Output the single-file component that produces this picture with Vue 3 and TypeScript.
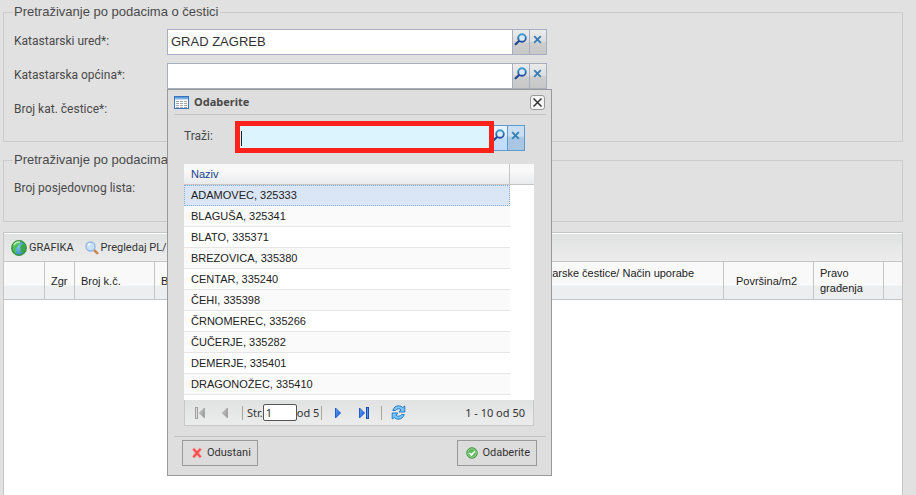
<script setup lang="ts">
import { ref } from 'vue'

interface Municipality {
  name: string
  code: string
}

const office = ref('GRAD ZAGREB')
const municipality = ref('')
const parcel = ref('')
const possession = ref('')
const search = ref('')
const pageNo = ref('1')
const selected = ref('325333')

const rows: Municipality[] = [
  { name: 'ADAMOVEC', code: '325333' },
  { name: 'BLAGUŠA', code: '325341' },
  { name: 'BLATO', code: '335371' },
  { name: 'BREZOVICA', code: '335380' },
  { name: 'CENTAR', code: '335240' },
  { name: 'ČEHI', code: '335398' },
  { name: 'ČRNOMEREC', code: '335266' },
  { name: 'ČUČERJE', code: '335282' },
  { name: 'DEMERJE', code: '335401' },
  { name: 'DRAGONOŽEC', code: '335410' },
]
</script>

<template>
  <svg class="defs" aria-hidden="true">
    <defs>
      <linearGradient id="blueV" x1="0" y1="0" x2="0" y2="1">
        <stop offset="0" stop-color="#3f9fd0" />
        <stop offset="1" stop-color="#1c4a9c" />
      </linearGradient>
      <linearGradient id="arrowBlue" x1="0" y1="0" x2="1" y2="1">
        <stop offset="0" stop-color="#6fb4fa" />
        <stop offset="1" stop-color="#0a3fc4" />
      </linearGradient>
      <linearGradient id="arrowGrey" x1="0" y1="0" x2="1" y2="1">
        <stop offset="0" stop-color="#d4d4d4" />
        <stop offset="1" stop-color="#8c8c8c" />
      </linearGradient>
      <radialGradient id="globe" cx="0.45" cy="0.4" r="0.7">
        <stop offset="0" stop-color="#7cc4f0" />
        <stop offset="1" stop-color="#2a7fc0" />
      </radialGradient>
      <symbol id="find" viewBox="0 0 13 13">
        <path d="M5.3 7.700 1.600 11.200" fill="none" stroke="#1d458f" stroke-width="2.200" stroke-linecap="round" />
        <circle cx="8" cy="5" r="3.800" fill="#dcebf5" stroke="url(#blueV)" stroke-width="1.900" />
      </symbol>
      <symbol id="cross" viewBox="0 0 9 9">
        <path d="M1.200 1.200l6.600 6.600M7.800 1.200l-6.600 6.600" fill="none" stroke="#3480b8" stroke-width="1.900" />
      </symbol>
    </defs>
  </svg>

  <main class="page">
    <form class="search-form" @submit.prevent>
      <fieldset class="group">
        <legend>Pretraživanje po podacima o čestici</legend>
        <div class="row">
          <label for="office">Katastarski ured*:</label>
          <div class="trigger-field">
            <input id="office" v-model="office" type="text" />
            <button type="button" aria-label="Traži ured"><svg class="find"><use href="#find" /></svg></button>
            <button type="button" aria-label="Očisti ured"><svg class="cross"><use href="#cross" /></svg></button>
          </div>
        </div>
        <div class="row">
          <label for="municipality">Katastarska općina*:</label>
          <div class="trigger-field">
            <input id="municipality" v-model="municipality" type="text" />
            <button type="button" aria-label="Traži općinu"><svg class="find"><use href="#find" /></svg></button>
            <button type="button" aria-label="Očisti općinu"><svg class="cross"><use href="#cross" /></svg></button>

            <section class="dialog" role="dialog" aria-labelledby="dialog-title">
              <header class="dialog-head">
                <svg class="icon-table" viewBox="0 0 15 13">
                  <rect x=".5" y=".5" width="14" height="12" fill="#fff" stroke="#3b75bd" />
                  <path d="M1 1h13v2.500H1z" fill="#82b5ea" />
                  <path d="M1 1.500h13" stroke="#5a96d8" />
                  <path d="M2 5.500h3m1 0h3m1 0h3M2 7.500h3m1 0h3m1 0h3M2 9.500h3m1 0h3m1 0h3M2 11.500h3m1 0h3m1 0h3" stroke="#a7a7a7" />
                </svg>
                <h2 id="dialog-title">Odaberite</h2>
                <button type="button" class="close" aria-label="Zatvori">
                  <svg viewBox="0 0 9 9"><path d="M.5.5l8 8M8.500.5l-8 8" stroke="#333" stroke-width="1.500" /></svg>
                </button>
              </header>

              <div class="lookup">
                <label for="search">Traži:</label>
                <div class="trigger-field active">
                  <input id="search" v-model="search" type="text" />
                  <span class="caret"></span>
                  <button type="button" aria-label="Traži"><svg class="find"><use href="#find" /></svg></button>
                  <button type="button" aria-label="Očisti"><svg class="cross"><use href="#cross" /></svg></button>
                </div>
              </div>

              <div class="list">
                <table>
                  <thead>
                    <tr>
                      <th scope="col">Naziv</th>
                      <th class="spare"></th>
                    </tr>
                  </thead>
                  <tbody>
                    <tr
                      v-for="row in rows"
                      :key="row.code"
                      :class="{ selected: row.code === selected }"
                      @click="selected = row.code"
                    >
                      <td>{{ row.name }}, {{ row.code }}</td>
                      <td class="spare"></td>
                    </tr>
                  </tbody>
                </table>

                <div class="pager">
                  <button type="button" disabled aria-label="Prva stranica">
                    <svg viewBox="0 0 12 12"><rect x="1.500" y=".5" width="2" height="11" fill="#ddd" stroke="#a0a0a0" /><path d="M10.500 1v10L5.500 6z" fill="url(#arrowGrey)" stroke="#a5a5a5" /></svg>
                  </button>
                  <button type="button" disabled aria-label="Prethodna stranica">
                    <svg viewBox="0 0 12 12"><path d="M8.500 1v10L3.500 6z" fill="url(#arrowGrey)" stroke="#a5a5a5" /></svg>
                  </button>
                  <span class="sep"></span>
                  <label for="page-no">Str.</label>
                  <input id="page-no" v-model="pageNo" type="text" />
                  <span>od 5</span>
                  <span class="sep near"></span>
                  <button type="button" class="next" aria-label="Sljedeća stranica">
                    <svg viewBox="0 0 12 12"><path d="M3.500 1v10L8.500 6z" fill="url(#arrowBlue)" stroke="#1e5fd8" /></svg>
                  </button>
                  <button type="button" aria-label="Zadnja stranica">
                    <svg viewBox="0 0 12 12"><path d="M1.500 1v10L6.500 6z" fill="url(#arrowBlue)" stroke="#1e5fd8" /><rect x="8.500" y=".5" width="2" height="11" fill="#5a94e8" stroke="#174eb8" /></svg>
                  </button>
                  <span class="sep wide"></span>
                  <button type="button" aria-label="Osvježi">
                    <svg class="refresh" viewBox="0 0 15 15">
                      <path d="M1.800 5.500C2.500 2.500 5 .8 7.500.8c1.800 0 3.200.7 4.200 1.800L13.800 1v6H8l2-2.200C8.500 3.200 5.500 3.500 4.500 5.500z" fill="#79c6f8" stroke="#1b73c6" stroke-width=".9" stroke-linejoin="round" />
                      <path d="M13.200 9.500c-.7 3-3.200 4.700-5.700 4.700-1.800 0-3.200-.7-4.200-1.800L1.200 14V8H7l-2 2.200c1.500 1.600 4.500 1.300 5.500-.7z" fill="#79c6f8" stroke="#1b73c6" stroke-width=".9" stroke-linejoin="round" />
                    </svg>
                  </button>
                  <span class="count">1 - 10 od 50</span>
                </div>
              </div>

              <footer class="dialog-foot">
                <button type="button">
                  <svg viewBox="0 0 13 13"><path d="M1.500 2.800 3.500 1 6.500 4.200 9.500 1l2 1.800-3.200 3.700 3.200 3.700-2 1.800-3-3.200-3 3.200-2-1.800 3.200-3.700z" fill="#f4504f" stroke="#f99" stroke-width=".8" /></svg>
                  Odustani
                </button>
                <button type="button">
                  <svg viewBox="0 0 13 13"><circle cx="6.500" cy="6.500" r="5.700" fill="#5db85a" stroke="#3b8f3a" /><circle cx="6.500" cy="6.500" r="4.600" fill="none" stroke="#a5dba0" stroke-width=".8" /><path d="M3.800 6.500 6 8.600l3.500-4" fill="none" stroke="#fff" stroke-width="1.800" /></svg>
                  Odaberite
                </button>
              </footer>
            </section>
          </div>
        </div>
        <div class="row">
          <label for="parcel">Broj kat. čestice*:</label>
          <div class="trigger-field"><input id="parcel" v-model="parcel" type="text" /></div>
        </div>
      </fieldset>

      <fieldset class="group short">
        <legend>Pretraživanje po podacima o posjedovnom listu</legend>
        <div class="row">
          <label for="possession">Broj posjedovnog lista:</label>
          <div class="trigger-field"><input id="possession" v-model="possession" type="text" /></div>
        </div>
      </fieldset>
    </form>

    <section class="results">
      <div class="toolbar">
        <button type="button">
          <svg class="globe" viewBox="0 0 16 16">
            <circle cx="8" cy="8" r="7.200" fill="url(#globe)" stroke="#35953a" stroke-width="1.500" />
            <path d="M2 5.500C3 3 5.500 1.500 8 1.800L9 3.500 7 5 6.500 7 4.500 8.500 5.500 11 5 13.500C2.500 12 1.200 9 2 5.500z" fill="#4fc050" />
            <path d="M10 5.500l3-2c1.500 1.800 2 4.500 1.200 7L11.500 13l-2-1 .5-2.500-1-2z" fill="#3ba745" />
            <path d="M2.800 5.200C4 2.900 6.500 1.700 9 2.100" fill="none" stroke="#c4efba" stroke-width="1.300" />
          </svg>
          GRAFIKA
        </button>
        <button type="button">
          <svg class="lens" viewBox="0 0 14 14">
            <path d="M9.200 9.200l3 3" stroke="#c98650" stroke-width="2.600" stroke-linecap="round" />
            <circle cx="5.500" cy="5.500" r="4.500" fill="#c8e2fb" stroke="#93b8e4" stroke-width="1.400" />
            <path d="M3 5C3.300 3.800 4.300 3 5.500 3" fill="none" stroke="#fff" stroke-width="1.300" />
          </svg>
          Pregledaj PL/KO
        </button>
      </div>
      <table>
        <colgroup>
          <col class="c-check" /><col class="c-zgr" /><col class="c-num" /><col class="c-num" /><col />
          <col class="c-area" /><col class="c-right" /><col class="c-end" />
        </colgroup>
        <thead>
          <tr>
            <th></th>
            <th scope="col">Zgr</th>
            <th scope="col">Broj k.č.</th>
            <th scope="col">Broj</th>
            <th scope="col" class="address">Adresa katastarske čestice/ Način uporabe</th>
            <th scope="col" class="area">Površina/m2</th>
            <th scope="col">Pravo građenja</th>
            <th></th>
          </tr>
        </thead>
      </table>
    </section>
  </main>
</template>

<style>
body {
  background: #e1e1e1;
  overflow: hidden;
}
</style>

<style scoped>
.defs {
  position: absolute;
  width: 0;
  height: 0;
}
.page {
  box-sizing: border-box;
  display: flex;
  flex-direction: column;
  min-height: 100vh;
  padding: 4px 13px 0 3px;
  color: #4a4a4a;
  font: 12px/16px Roboto, "Noto Sans", sans-serif;
}
button,
input {
  box-sizing: border-box;
  margin: 0;
  font: inherit;
  color: inherit;
}
button {
  display: flex;
  align-items: center;
  justify-content: center;
  padding: 0;
  border: 0;
  background: none;
  white-space: nowrap;
}
svg {
  flex: none;
}
.search-form {
  display: flex;
  flex-direction: column;
  gap: 10px;
}
.group {
  margin: 0;
  padding: 9px 10px 18px;
  border: 1px solid #cbcbcb;
}
.group.short {
  padding-top: 8px;
  padding-bottom: 19px;
}
.group legend {
  padding: 0 1px;
  margin-left: -1px;
  font: 13px/16px "Liberation Sans", sans-serif;
}
.row {
  display: flex;
  height: 26px;
}
.row + .row {
  margin-top: 8px;
}
.row > label {
  width: 153px;
  line-height: 24px;
}
.trigger-field {
  position: relative;
  display: flex;
  width: 380px;
  height: 26px;
}
.trigger-field > input {
  flex: 1;
  min-width: 0;
  padding: 0 3px 2px;
  border: 1px solid #a9adc4;
  background: #fff;
  color: #333;
  font: 13px "Liberation Sans", sans-serif;
  outline: none;
}
.trigger-field > button {
  width: 17px;
  padding: 0 2px 6px 0;
  border: solid #a9adc4;
  border-width: 1px 1px 1px 0;
  background: linear-gradient(#ececec 0, #dedede 45%, #cdcdcd 55%, #c8c8c8 100%);
}
.find {
  width: 13px;
  height: 13px;
}
.cross {
  width: 9px;
  height: 9px;
}
.dialog {
  position: absolute;
  top: 100%;
  left: 0;
  z-index: 1;
  box-sizing: border-box;
  width: 385px;
  padding: 0 5px 9px 6px;
  border: 1px solid #999;
  background: #dedede;
}
.dialog-head {
  display: flex;
  align-items: center;
  gap: 5px;
  height: 24px;
  border-bottom: 1px solid #c3c3c3;
}
.icon-table {
  width: 15px;
  height: 13px;
}
.dialog-head h2 {
  flex: 1;
  margin: 0;
  font: 700 11px/16px "Noto Sans", sans-serif;
}
.close {
  width: 15px;
  height: 15px;
  margin-right: 1px;
  border: 1px solid #999;
  border-radius: 3px;
  background: #f5f5f5;
}
.close svg {
  width: 9px;
  height: 9px;
}
.lookup {
  display: flex;
  padding: 10px 21px 13px 10px;
}
.lookup > label {
  width: 54px;
  line-height: 22px;
}
.lookup .trigger-field {
  flex: 1;
}
.active > input {
  border-color: #5b9bd0;
  background: #dcf4fd;
}
.active > button {
  border-color: #5b9bd0;
  background: linear-gradient(#e6f2fd 0 40%, #c2ddfb 50% 100%);
}
.active > button + button {
  background: linear-gradient(#c9def0 0 40%, #a9c7e4 50% 100%);
}
.active::after {
  content: "";
  position: absolute;
  inset: -4px 31px -2px -3px;
  border: 5px solid #fb221b;
}
.caret {
  position: absolute;
  top: 6px;
  left: 3px;
  width: 1px;
  height: 15px;
  background: #222;
}
.list {
  margin: 0 12px 0 10px;
  background: #fff;
}
.list table {
  width: 100%;
  border-collapse: separate;
  border-spacing: 0;
  table-layout: fixed;
  color: #222;
  font: 11px/19px "Liberation Sans", sans-serif;
}
.list th,
.list td {
  box-sizing: border-box;
  height: 21px;
  padding: 0 7px;
  text-align: left;
}
.list th {
  border-right: 1px solid #c5c5c5;
  border-bottom: 1px solid #c5c5c5;
  background: linear-gradient(#f9f9f9 0 35%, #e8eaec);
  color: #15428b;
  font-weight: 400;
}
.list .spare {
  width: 24px;
  padding: 0;
  border-right: 0;
}
.list td:first-child {
  border-bottom: 1px solid #e6e6e6;
}
.list tr:nth-child(even) td:first-child {
  background: #fafafa;
}
.list .selected td:first-child {
  padding-left: 6px;
  border: 1px dotted #82abe0;
  background: #dae5f5;
  line-height: 17px;
}
.pager {
  display: flex;
  align-items: center;
  box-sizing: border-box;
  height: 26px;
  margin-top: 5px;
  padding: 0 8px 0 7px;
  border: 1px solid #c8c8c8;
  border-top: 0;
  background: linear-gradient(#e0e2e1, #ececec);
  color: #333;
  font: 11px/16px "Noto Sans", sans-serif;
}
.pager button {
  width: 16px;
  height: 16px;
  margin-right: 9px;
}
.pager .next {
  margin-right: 10px;
}
.pager svg {
  width: 12px;
  height: 12px;
}
.pager .refresh {
  width: 15px;
  height: 15px;
}
.pager input {
  width: 34px;
  height: 17px;
  padding: 0 2px;
  border: 1px solid #555;
  border-radius: 2px;
  background: #fff;
}
.sep {
  width: 1px;
  height: 14px;
  margin-right: 4px;
  background: #a9a69b;
}
.sep.near {
  margin: 0 8px 0 2px;
}
.sep.wide {
  margin-right: 8px;
}
.count {
  margin-left: auto;
}
.dialog-foot {
  display: flex;
  justify-content: space-between;
  margin-top: 10px;
  padding: 3px 9px 0 8px;
  border-top: 1px solid #c3c3c3;
}
.dialog-foot button {
  gap: 4px;
  height: 26px;
  padding: 0 6px 0 8px;
  border: 1px solid #999;
  background: #dcdcdc;
  color: #333;
  font-size: 11px;
}
.dialog-foot svg {
  width: 12px;
  height: 12px;
}
.results {
  flex: 1;
  display: flex;
  flex-direction: column;
  margin-top: 10px;
  border: 1px solid #c5c5c5;
  border-bottom: 0;
  background: #fff;
}
.toolbar {
  display: flex;
  align-items: center;
  gap: 11px;
  height: 27px;
  padding: 0 7px;
  border-top: 1px solid #fff;
  background: linear-gradient(#e0e2e1, #ececec);
}
.toolbar button {
  gap: 2px;
  color: #333;
  font-size: 11px;
}
.globe {
  width: 16px;
  height: 16px;
}
.lens {
  width: 14px;
  height: 14px;
}
.results table {
  width: 100%;
  table-layout: fixed;
  border-collapse: separate;
  border-spacing: 0;
  color: #222;
  font: 11px/15px "Liberation Sans", sans-serif;
}
.results th {
  box-sizing: border-box;
  height: 39px;
  padding: 1px 6px 0;
  border: solid #c5c5c5;
  border-width: 1px 1px 1px 0;
  background: linear-gradient(#f9f9f9 0 62%, #eceef0 66% 100%);
  font-weight: 400;
  text-align: left;
  white-space: nowrap;
}
.results th:last-child {
  border-right: 0;
}
.results th:nth-child(7) {
  padding-top: 0;
  white-space: normal;
}
.results .address {
  padding: 4px 29px 0 6px;
  text-align: right;
  vertical-align: top;
}
.results .area {
  padding-left: 12px;
}
.c-check { width: 41px; }
.c-zgr { width: 30px; }
.c-num { width: 80px; }
.c-area { width: 90px; }
.c-right { width: 70px; }
.c-end { width: 18px; }
</style>
